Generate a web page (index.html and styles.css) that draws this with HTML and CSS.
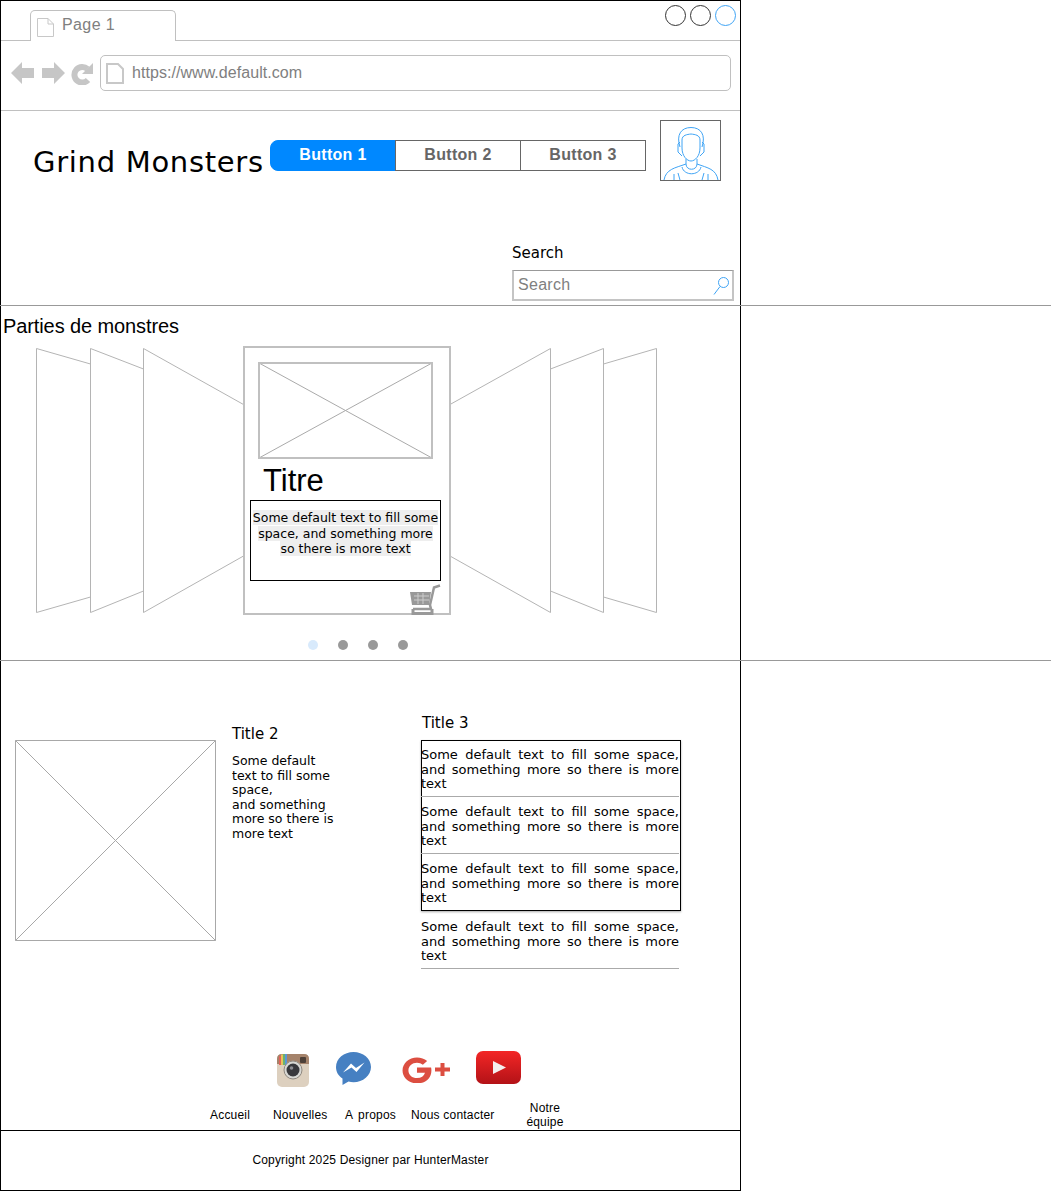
FILE: index.html
```html
<!DOCTYPE html>
<html lang="en">
<head>
    <meta charset="UTF-8">
    <meta name="viewport" content="width=device-width, initial-scale=1.0">
    <title>Grind Monsters</title>
    <link rel="stylesheet" href="styles.css">
</head>
<body>
    <div class="top-band">
        <div class="frame">
            <div class="tab-bar">
                <div class="tab">
                    <svg class="page-icon" width="17" height="19" viewBox="0 0 17 19"><path d="M.5.5H11L16.500 6V18.500H.5Z M11 .5V6H16.500" fill="#fff" stroke="#c8c8c8"/></svg>
                    <span>Page 1</span>
                </div>
                <div class="window-buttons">
                    <span class="circle"></span>
                    <span class="circle"></span>
                    <span class="circle blue"></span>
                </div>
            </div>
            <div class="address-bar">
                <svg class="nav-icon" width="24" height="22" viewBox="0 0 24 22"><path d="M0 11 11 0V6H23V16H11V22Z" fill="#c6c6c6"/></svg>
                <svg class="nav-icon" width="24" height="22" viewBox="0 0 24 22"><path d="M24 11 13 0V6H1V16H13V22Z" fill="#c6c6c6"/></svg>
                <svg class="nav-icon" width="22" height="23" viewBox="0 0 22 23"><path d="M16.500 7A7.800 7.800 0 1 0 17 18" fill="none" stroke="#c6c6c6" stroke-width="6"/><path d="M22 1V12H11Z" fill="#c6c6c6"/></svg>
                <div class="url-field">
                    <svg width="18" height="21" viewBox="0 0 18 21"><path d="M1 1H12L17 6V20H1Z" fill="#fff" stroke="#c8c8c8" stroke-width="2"/></svg>
                    <span>https://www.default.com</span>
                </div>
            </div>
            <header class="site-header">
                <div class="header-row">
                    <h1>Grind Monsters</h1>
                    <div class="button-group">
                        <button class="active">Button 1</button>
                        <button>Button 2</button>
                        <button>Button 3</button>
                    </div>
                    <div class="avatar">
                        <svg width="59" height="59" viewBox="0 0 59 59" fill="none" stroke="#3fa4f5">
                            <path d="M19 26C15 14 20 6.500 30 6.500 40 6.500 45 14 41 26"/>
                            <path d="M21 19C21 14 26 13.500 30 13 34 13.500 39 14 39 19V27C39 35 34 40 30 40 26 40 21 35 21 27Z"/>
                            <path d="M19 21 17 23V31L21 35M41 21 43 23V31L39 35"/>
                            <path d="M25 38V43C25 50 36 50 36 43V38"/>
                            <path d="M21 46C23 55 38 55 40 46"/>
                            <path d="M25 43C14 47 5 48 3 59M36 43C47 47 55 48 57 59"/>
                            <path d="M13 53V59M17 52 19 59M47 53V59M43 52 41 59"/>
                        </svg>
                    </div>
                </div>
                <div class="search-block">
                    <label for="search">Search</label>
                    <div class="search-field">
                        <input id="search" type="text" placeholder="Search">
                        <svg width="17" height="19" viewBox="0 0 17 19" fill="none" stroke="#3fa4f5"><circle cx="10.500" cy="6.500" r="5"/><path d="M7 10.500 1 18.500"/></svg>
                    </div>
                </div>
            </header>
        </div>
    </div>

    <section class="band">
        <div class="frame carousel">
            <h2>Parties de monstres</h2>
            <div class="stage">
                <svg class="side" width="208" height="266" viewBox="36 348 208 266" fill="#fff" stroke="#b4b4b4">
                    <path d="M36.500 348.500 90.500 364V597L36.500 612.500Z"/>
                    <path d="M90.500 348.500 143.500 369V591L90.500 612.500Z"/>
                    <path d="M143.500 348.500 243.500 404.500V556L143.500 612.500Z"/>
                </svg>
                <article class="card">
                    <svg class="card-image" width="175" height="97" viewBox="0 0 175 97">
                        <path d="M1 1 174 96M174 1 1 96" fill="none" stroke="#aaa"/>
                        <rect x="1" y="1" width="173" height="95" fill="none" stroke="#c0c0c0" stroke-width="2"/>
                    </svg>
                    <h3>Titre</h3>
                    <p class="card-text"><span>Some default text to fill some space, and something more so there is more text</span></p>
                    <svg class="cart" width="32" height="31" viewBox="0 0 32 31">
                        <path d="M1 8H22L20 21H3Z" fill="#999"/>
                        <path d="M5 12H20M5 16H20M9 9V20M14 9V20" stroke="#ccc"/>
                        <path d="M31 1.500 25 3.500 21 21 22 25H4" fill="none" stroke="#999" stroke-width="2.500"/>
                        <path d="M4 25V31M23 25V31" stroke="#999" stroke-width="3"/>
                        <rect x="3" y="28" width="21" height="3" fill="#999"/>
                    </svg>
                </article>
                <svg class="side" width="208" height="266" viewBox="450 348 208 266" fill="#fff" stroke="#b4b4b4">
                    <path d="M450 404.500 550.500 348.500V612.500L450 556Z"/>
                    <path d="M550.500 369 603.500 348.500V612.500L550.500 591Z"/>
                    <path d="M603.500 364 656.500 348.500V612.500L603.500 597Z"/>
                </svg>
            </div>
            <div class="dots">
                <span class="dot current"></span>
                <span class="dot"></span>
                <span class="dot"></span>
                <span class="dot"></span>
            </div>
        </div>
    </section>

    <div class="frame lower">
        <main class="content">
            <svg class="photo" width="201" height="201" viewBox="0 0 201 201" fill="none" stroke="#a8a8a8"><path d="M.5.5H200.500V200.500H.5ZM.5.5 200.500 200.500M200.500.5 .5 200.500"/></svg>
            <div class="intro">
                <h4>Title 2</h4>
                <p>Some default text to fill some space,<br>and something more so there is more text</p>
            </div>
            <div class="list-col">
                <h4>Title 3</h4>
                <div class="list-box">
                    <p>Some default text to fill some space, and something more so there is more text</p>
                    <p>Some default text to fill some space, and something more so there is more text</p>
                    <p>Some default text to fill some space, and something more so there is more text</p>
                </div>
                <p class="list-last">Some default text to fill some space, and something more so there is more text</p>
            </div>
        </main>
        <div class="socials">
            <svg class="instagram" width="32" height="33" viewBox="0 0 32 33">
                <rect width="32" height="33" rx="5" fill="#ddd0bf"/>
                <path d="M0 10V5Q0 0 5 0H27Q32 0 32 5V10H23A9 9 0 0 0 9 10Z" fill="#a5836b"/>
                <path d="M2 2H4V11H2Z" fill="#e0635a"/><path d="M4 .5H6V11H4Z" fill="#e8c35a"/><path d="M6 0H8V11H6Z" fill="#6db26d"/><path d="M8 0H10V11H8Z" fill="#5a96d8"/>
                <rect x="23" y="3" width="6" height="6" rx="1" fill="#4d4038"/>
                <circle cx="16" cy="16" r="9" fill="#d8d8d4" stroke="#8f8880"/>
                <circle cx="16" cy="16" r="6.500" fill="#38383c"/>
                <circle cx="14.500" cy="14" r="1.800" fill="#8d8d92"/>
            </svg>
            <svg class="messenger" width="35" height="33" viewBox="0 0 35 33">
                <path d="M17.500 0C8 0 0 6.500 0 15 0 20 2.500 24 6.500 26.500V33L12.500 29.500C14 30 16 30.200 17.500 30.200 27 30.200 35 23.500 35 15 35 6.500 27 0 17.500 0Z" fill="#4680c2"/>
                <path d="M7 20.500 15 11.500 20 16 28.500 10.500 20.500 20 15.500 15.500Z" fill="#fff"/>
            </svg>
            <svg class="gplus" width="48" height="26" viewBox="0 0 48 26">
                <path transform="scale(1.07 .96)" d="M14 11V16.500H21.500C20.500 20 18 22 14 22 9.500 22 6 18.500 6 14S9.500 6 14 6C16.200 6 18 6.800 19.500 8.200L23.500 4.200C21 1.800 17.700 .5 14 .5 6.500.5.5 6.500.5 14S6.500 27.500 14 27.500C22 27.500 27.500 22 27.500 14 27.500 13 27.400 12 27.200 11Z" fill="#dc4e41"/>
                <path d="M38.500 6H42.500V10.500H48V14.500H42.500V19H38.500V14.500H33V10.500H38.500Z" fill="#dc4e41"/>
            </svg>
            <svg class="youtube" width="45" height="33" viewBox="0 0 45 33">
                <defs><linearGradient id="yt" x1="0" y1="0" x2="0" y2="1"><stop offset="0" stop-color="#f32626"/><stop offset="1" stop-color="#b31217"/></linearGradient></defs>
                <rect width="45" height="33" rx="7" fill="url(#yt)"/>
                <path d="M17 10 30 16.500 17 23Z" fill="#f4eeee"/>
            </svg>
        </div>
        <nav class="footer-nav">
            <a href="#" class="nav-accueil">Accueil</a>
            <a href="#" class="nav-nouvelles">Nouvelles</a>
            <a href="#" class="nav-propos">A propos</a>
            <a href="#" class="nav-contact">Nous contacter</a>
            <a href="#" class="nav-equipe">Notre équipe</a>
        </nav>
        <footer class="copyright">Copyright 2025 Designer par HunterMaster</footer>
    </div>
</body>
</html>
```

FILE: styles.css
```css
* { box-sizing: border-box; }
body { margin: 0; width: 1051px; background: #fff; color: #000; font-family: "Liberation Sans", Arial, sans-serif; }
h1, h2, h3, h4, p { margin: 0; font-weight: normal; }

.frame { width: 741px; border-left: 1px solid #000; border-right: 1px solid #000; }
.top-band { border-bottom: 1px solid #999; height: 306px; }
.top-band .frame { height: 305px; border-top: 1px solid #000; }
.band { border-bottom: 1px solid #999; height: 355px; }

/* browser chrome */
.tab-bar { height: 40px; border-bottom: 1px solid #c0c0c0; display: flex; justify-content: space-between; padding-left: 29px; }
.tab { width: 146px; height: 31px; margin-top: 9px; background: #fff; border: 1px solid #c0c0c0; border-bottom: none; border-radius: 5px 5px 0 0; display: flex; align-items: flex-start; padding: 7px 0 0 6px; gap: 8px; font-size: 16px; color: #808080; letter-spacing: 0.4px; }
.tab span { margin-top: -2px; }
.window-buttons { display: flex; gap: 4px; padding: 4px 4px 0 0; }
.circle { width: 21px; height: 21px; border: 1px solid #333; border-radius: 50%; }
.circle.blue { border-color: #3fa4f5; }

.address-bar { height: 70px; border-bottom: 1px solid #c0c0c0; display: flex; align-items: flex-start; padding: 14px 9px 0 10px; }
.nav-icon { margin-top: 7px; margin-right: 6px; flex: none; }
.url-field { flex: 1; height: 36px; margin-left: 1px; border: 1px solid #c0c0c0; border-radius: 5px; display: flex; align-items: center; gap: 8px; padding-left: 5px; font-size: 16px; color: #808080; letter-spacing: 0.05px; }

/* header */
.site-header { height: 194px; }
.header-row { display: flex; align-items: flex-start; height: 130px; }
h1 { font-family: "DejaVu Sans", Verdana, sans-serif; font-size: 29px; line-height: 34px; letter-spacing: 0.7px; margin: 34px 0 0 32px; width: 237px; white-space: nowrap; color: #000; }
.button-group { display: flex; margin-top: 29px; }
.button-group button { width: 126px; height: 31px; margin: 0; margin-left: -1px; background: #fff; border: 1px solid #666; color: #666; font: bold 16px "Liberation Sans", Arial, sans-serif; letter-spacing: 0.3px; padding: 0 0 2px; }
.button-group button:first-child { margin-left: 0; }
.button-group .active { background: #0088ff; border-color: #0088ff; color: #fff; border-radius: 8px 0 0 8px; }
.avatar { width: 61px; height: 61px; margin: 9px 0 0 14px; border: 1px solid #666; }
.avatar svg { display: block; }

.search-block { width: 222px; margin: 2px 0 0 511px; }
.search-block label { display: block; font: 15px "DejaVu Sans", Verdana, sans-serif; height: 27px; padding-top: 1px; }
.search-field { height: 31px; border: 2px solid #c4c4c4; border-top: 1px solid #999; display: flex; align-items: center; justify-content: space-between; padding-right: 2px; }
.search-field input { border: none; outline: none; width: 180px; padding: 0 0 0 4px; font: 16px "Liberation Sans", Arial, sans-serif; letter-spacing: 0.3px; }
.search-field input::placeholder { color: #808080; opacity: 1; }

/* carousel */
.carousel { height: 354px; }
h2 { font-size: 20px; line-height: 24px; letter-spacing: -0.1px; padding: 8px 0 0 2px; height: 42px; }
.stage { display: flex; align-items: flex-start; padding-left: 35px; }
.side { display: block; flex: none; }
.card { position: relative; flex: none; width: 208px; height: 269px; margin: -2px -1px 0 -1px; border: 2px solid #c0c0c0; padding: 14px 0 0 13px; }
.card-image { display: block; }
.card h3 { font-size: 31px; line-height: 36px; margin: 4px 0 0 5px; height: 37px; }
.card-text { width: 191px; height: 81px; margin-left: -8px; border: 1px solid #000; text-align: center; font: 12.500px/15.500px "DejaVu Sans", Verdana, sans-serif; padding: 9px 1px 0; }
.card-text span { background: #eee; }
.cart { position: absolute; right: 8px; bottom: -2px; }
.dots { display: flex; gap: 20px; padding: 25px 0 0 307px; }
.dot { width: 10px; height: 10px; border-radius: 50%; background: #999; }
.dot.current { background: #d8eafc; }

/* content */
.lower { height: 530px; border-bottom: 1px solid #000; }
.content { display: flex; align-items: flex-start; height: 390px; }
.photo { display: block; flex: none; margin: 79px 0 0 14px; }
.intro { width: 112px; margin: 64px 0 0 16px; font: 12.500px/14.500px "DejaVu Sans", Verdana, sans-serif; }
h4 { font: 15px/18px "DejaVu Sans", Verdana, sans-serif; }
.intro h4 { margin-bottom: 11px; }
.intro p { width: 108px; }
.list-col { width: 260px; margin: 53px 0 0 77px; font: 13px/14.500px "DejaVu Sans", Verdana, sans-serif; }
.list-col h4 { margin: 0 0 8px 1px; }
.list-box { border: 1px solid #000; box-shadow: 0 1px 2px #aaa; height: 171px; }
.list-box p { text-align: justify; height: 57px; padding-top: 8px; margin-left: -1px; border-bottom: 1px solid #aaa; width: 258px; }
.list-box p:first-child { height: 56px; padding-top: 7px; }
.list-box p:last-child { border-bottom: none; }
.list-last { text-align: justify; width: 258px; height: 58px; border-bottom: 1px solid #aaa; padding-top: 9px; }

.socials { display: flex; align-items: flex-start; margin-left: 276px; gap: 27px; height: 50px; }
.socials svg { display: block; flex: none; }
.instagram { margin-top: 3px; }
.messenger { margin-top: 1px; }
.gplus { margin: 6px 0 0 4px; }
.youtube { margin-left: -1px; }
.footer-nav { display: flex; height: 29px; align-items: flex-start; }
.footer-nav a { font-size: 12px; line-height: 14px; margin-top: 7px; color: #000; text-decoration: none; letter-spacing: 0.2px; white-space: nowrap; }
.nav-accueil { margin-left: 209px; width: 63px; }
.nav-nouvelles { width: 72px; }
.nav-propos { width: 66px; word-spacing: 2px; }
.nav-contact { width: 111px; }
.footer-nav .nav-equipe { width: 46px; margin-top: 0; white-space: normal; text-align: center; }
.copyright { border-top: 1px solid #000; height: 60px; font-size: 12px; text-align: center; line-height: 58px; letter-spacing: 0.17px; }
```
